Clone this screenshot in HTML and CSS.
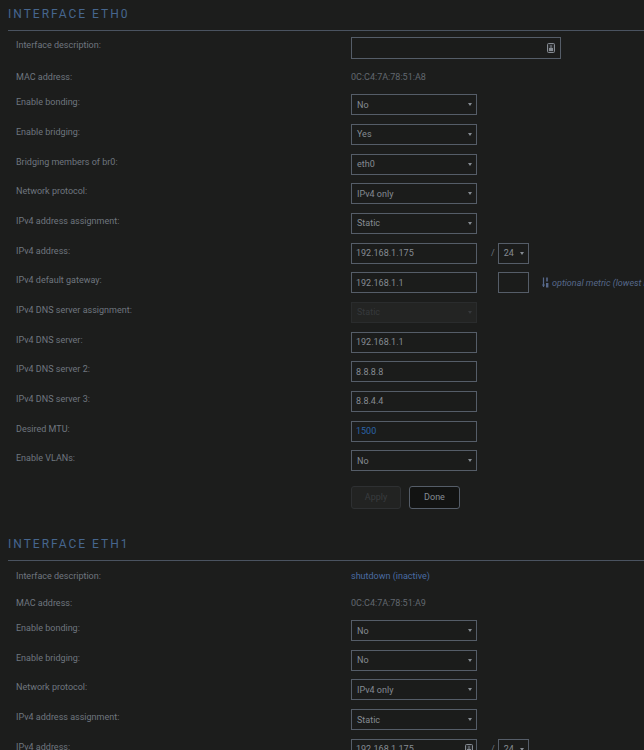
FILE: index.html
```html
<!DOCTYPE html>
<html lang="en">
<head>
<meta charset="utf-8">
<title>Network interfaces</title>
<link rel="stylesheet" href="styles.css">
</head>
<body>
<section class="iface">
  <h2 class="iface-title">INTERFACE ETH0</h2>
  <div class="form">
    <div class="row">
      <span class="lbl">Interface description:</span>
      <div class="val">
        <span class="field">
          <input class="inp inp-wide" type="text" value="">
          <svg class="key-icon key-icon-wide" width="8" height="10" viewBox="0 0 8 10"><rect x="0.5" y="0.5" width="7" height="9" rx="1" fill="#2b2d2f" stroke="#858b92"/><rect x="2" y="5" width="4" height="3" fill="#858b92"/><path d="M4 2v3" stroke="#858b92"/></svg>
        </span>
      </div>
    </div>
    <div class="row row-text">
      <span class="lbl">MAC address:</span>
      <span class="val txt-muted">0C:C4:7A:78:51:A8</span>
    </div>
    <div class="row"><span class="lbl">Enable bonding:</span><div class="val"><div class="sel"><span>No</span><i class="caret"></i></div></div></div>
    <div class="row"><span class="lbl">Enable bridging:</span><div class="val"><div class="sel"><span>Yes</span><i class="caret"></i></div></div></div>
    <div class="row"><span class="lbl">Bridging members of br0:</span><div class="val"><div class="sel"><span>eth0</span><i class="caret"></i></div></div></div>
    <div class="row"><span class="lbl">Network protocol:</span><div class="val"><div class="sel"><span>IPv4 only</span><i class="caret"></i></div></div></div>
    <div class="row"><span class="lbl">IPv4 address assignment:</span><div class="val"><div class="sel"><span>Static</span><i class="caret"></i></div></div></div>
    <div class="row">
      <span class="lbl">IPv4 address:</span>
      <div class="val">
        <input class="inp" type="text" value="192.168.1.175">
        <span class="slash">/</span>
        <div class="sel sel-prefix"><span>24</span><i class="caret"></i></div>
      </div>
    </div>
    <div class="row">
      <span class="lbl">IPv4 default gateway:</span>
      <div class="val">
        <input class="inp" type="text" value="192.168.1.1">
        <input class="inp inp-metric" type="text" value="">
        <svg class="sort-icon" width="7" height="11" viewBox="0 0 7 11"><path d="M1.5 0.5v9.5" stroke="#56688a" stroke-width="1.2" fill="none"/><path d="M0 7.6l1.5 2.6 1.5-2.6z" fill="#56688a"/><rect x="4.2" y="0.5" width="1.6" height="4" fill="#56688a"/><rect x="4" y="6" width="2.4" height="4.5" fill="#56688a"/></svg>
        <span class="hint">optional metric (lowest is preferred)</span>
      </div>
    </div>
    <div class="row"><span class="lbl">IPv4 DNS server assignment:</span><div class="val"><div class="sel sel-disabled"><span>Static</span><i class="caret"></i></div></div></div>
    <div class="row"><span class="lbl">IPv4 DNS server:</span><div class="val"><input class="inp" type="text" value="192.168.1.1"></div></div>
    <div class="row"><span class="lbl">IPv4 DNS server 2:</span><div class="val"><input class="inp" type="text" value="8.8.8.8"></div></div>
    <div class="row"><span class="lbl">IPv4 DNS server 3:</span><div class="val"><input class="inp" type="text" value="8.8.4.4"></div></div>
    <div class="row"><span class="lbl">Desired MTU:</span><div class="val"><input class="inp inp-blue" type="text" value="1500"></div></div>
    <div class="row"><span class="lbl">Enable VLANs:</span><div class="val"><div class="sel"><span>No</span><i class="caret"></i></div></div></div>
  </div>
  <div class="actions">
    <button class="btn btn-disabled" type="button">Apply</button>
    <button class="btn" type="button">Done</button>
  </div>
</section>

<section class="iface">
  <h2 class="iface-title">INTERFACE ETH1</h2>
  <div class="form">
    <div class="row row-text">
      <span class="lbl">Interface description:</span>
      <span class="val txt-link">shutdown (inactive)</span>
    </div>
    <div class="row row-text">
      <span class="lbl">MAC address:</span>
      <span class="val txt-muted">0C:C4:7A:78:51:A9</span>
    </div>
    <div class="row"><span class="lbl">Enable bonding:</span><div class="val"><div class="sel"><span>No</span><i class="caret"></i></div></div></div>
    <div class="row"><span class="lbl">Enable bridging:</span><div class="val"><div class="sel"><span>No</span><i class="caret"></i></div></div></div>
    <div class="row"><span class="lbl">Network protocol:</span><div class="val"><div class="sel"><span>IPv4 only</span><i class="caret"></i></div></div></div>
    <div class="row"><span class="lbl">IPv4 address assignment:</span><div class="val"><div class="sel"><span>Static</span><i class="caret"></i></div></div></div>
    <div class="row">
      <span class="lbl">IPv4 address:</span>
      <div class="val">
        <span class="field">
          <input class="inp" type="text" value="192.168.1.175">
          <svg class="key-icon" width="8" height="10" viewBox="0 0 8 10"><rect x="0.5" y="0.5" width="7" height="9" rx="1" fill="#2b2d2f" stroke="#858b92"/><rect x="2" y="5" width="4" height="3" fill="#858b92"/><path d="M4 2v3" stroke="#858b92"/></svg>
        </span>
        <span class="slash">/</span>
        <div class="sel sel-prefix"><span>24</span><i class="caret"></i></div>
      </div>
    </div>
    <div class="row">
      <span class="lbl">IPv4 default gateway:</span>
      <div class="val"><input class="inp" type="text" value=""></div>
    </div>
  </div>
</section>
</body>
</html>
```

FILE: styles.css
```css
html {
  overflow: hidden;
  background: #1c1d1c;
}

body {
  margin: 0;
  background: #1c1d1c;
  font-family: Roboto, "Liberation Sans", sans-serif;
  font-size: 9px;
  color: #6f767f;
}

.iface {
  margin-left: 8px;
}

.iface-title {
  margin: 0;
  padding: 7px 0 9px;
  font-family: Roboto, "Liberation Sans", sans-serif;
  font-weight: 400;
  font-size: 12px;
  line-height: 14px;
  letter-spacing: 2px;
  color: #46668e;
  border-bottom: 1px solid #4a5360;
}

.form {
  padding-top: 6px;
}

.row {
  display: grid;
  grid-template-columns: 335px 1fr;
  align-items: start;
  padding-left: 8px;
  margin-bottom: 8.67px;
}

.lbl {
  line-height: 17px;
  color: #6f767f;
  white-space: nowrap;
}

.row-text {
  padding-top: 1px;
}

.row-text .val {
  line-height: 17px;
}

.val {
  display: flex;
  align-items: center;
  white-space: nowrap;
}

.txt-muted {
  color: #62686f;
}

.txt-link {
  color: #4a6ca3;
}

.field {
  position: relative;
  display: inline-flex;
}

.inp {
  appearance: none;
  box-sizing: border-box;
  width: 126px;
  height: 21px;
  margin: 0;
  padding: 0 4px;
  border: 1px solid #555d68;
  border-radius: 0;
  background: #1b1c1b;
  color: #858b92;
  font-family: Roboto, "Liberation Sans", sans-serif;
  font-size: 9px;
  outline: none;
}

.inp-wide {
  width: 210px;
  height: 22px;
}

.inp-blue {
  color: #2a63a8;
}

.inp-metric {
  width: 31px;
  margin-left: 21px;
}

.key-icon {
  position: absolute;
  right: 4px;
  top: 5px;
}

.key-icon-wide {
  right: 6px;
  top: 6px;
}

.sel {
  box-sizing: border-box;
  width: 126px;
  height: 21px;
  display: flex;
  align-items: center;
  justify-content: space-between;
  padding: 0 4px 0 5px;
  border: 1px solid #555d68;
  background: #1b1c1b;
  color: #858b92;
}

.caret {
  width: 0;
  height: 0;
  border-left: 2px solid transparent;
  border-right: 2px solid transparent;
  border-top: 3px solid #858b92;
}

.sel-prefix {
  width: 31px;
  margin-left: 3px;
  padding-right: 4px;
}

.sel-disabled {
  background: #232423;
  border-color: #2a2c2d;
  color: #36393c;
}

.sel-disabled .caret {
  border-top-color: #36393c;
}

.slash {
  margin-left: 14px;
  color: #6f767f;
}

.sort-icon {
  margin-left: 13px;
}

.hint {
  margin-left: 3px;
  font-style: italic;
  color: #56688a;
}

.actions {
  display: flex;
  gap: 8px;
  padding: 6px 0 21px 343px;
}

.btn {
  box-sizing: border-box;
  height: 23px;
  width: 51px;
  margin: 0;
  padding: 0;
  border: 1px solid #555d68;
  border-radius: 3px;
  background: #121312;
  color: #858b92;
  font-family: Roboto, "Liberation Sans", sans-serif;
  font-size: 9px;
}

.btn-disabled {
  width: 50px;
  background: #222322;
  border-color: #2e3032;
  color: #393c3f;
}
```
